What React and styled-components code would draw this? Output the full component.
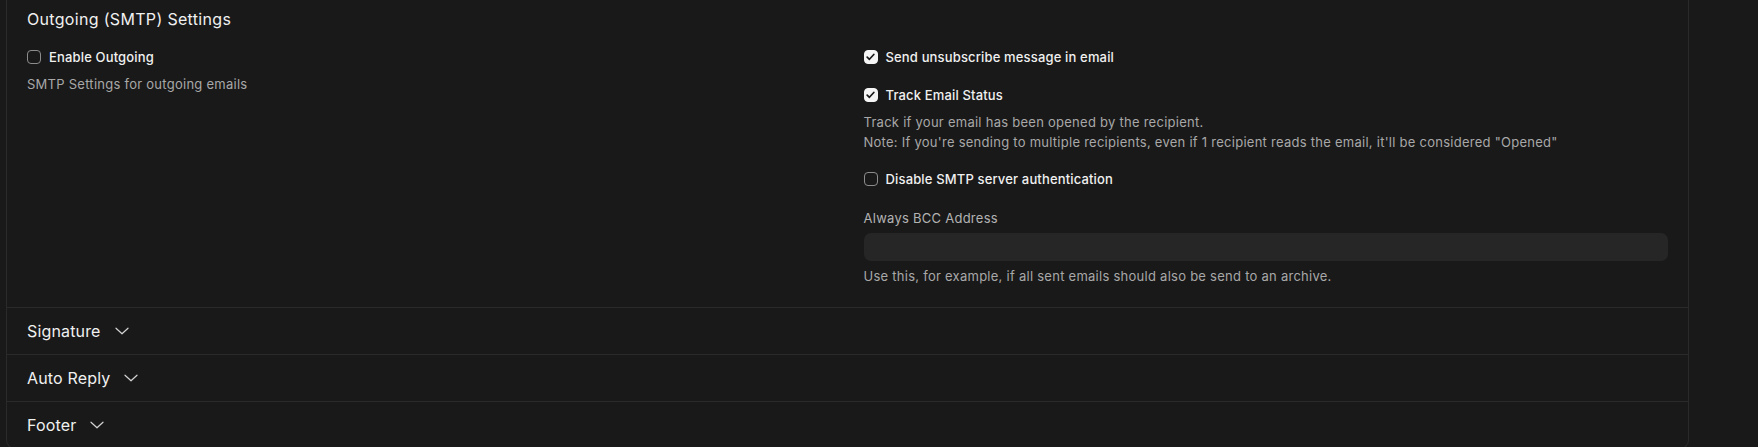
import React from 'react';
import styled, { createGlobalStyle } from 'styled-components';

const GlobalStyle = createGlobalStyle`
    html, body {
        margin: 0;
        padding: 0;
        background: #191919;
        font-family: Inter, "Noto Sans", sans-serif;
        -webkit-font-smoothing: antialiased;
    }
`;

const Page = styled.div`
    padding-left: 6px;
    height: 447px;
    overflow: hidden;
`;

const Card = styled.div`
    width: 1683px;
    box-sizing: border-box;
    border: 1px solid #2a2a2a;
    border-top: none;
    border-radius: 0 0 9px 9px;
    background: #191919;
`;

const Section = styled.div`
    padding: 7px 20px 21px;
`;

const SectionTitle = styled.h2`
    margin: 0;
    font-size: 16px;
    line-height: 24px;
    font-weight: 400;
    letter-spacing: 0.02em;
    color: #f0f0f0;
`;

const Columns = styled.div`
    display: grid;
    grid-template-columns: 1fr 1fr;
    column-gap: 32px;
    margin-top: 15px;
`;

const Column = styled.div`
    display: flex;
    flex-direction: column;
    gap: 16px;
`;

const Field = styled.div`
    display: flex;
    flex-direction: column;
    gap: ${(p) => p.gap || 6}px;
    margin-top: ${(p) => p.offset || 0}px;
`;

const CheckRow = styled.label`
    display: flex;
    align-items: center;
    gap: 8px;
    height: 22px;
    font-size: 13px;
    font-weight: 500;
    letter-spacing: 0.012em;
    color: #f0f0f0;
    cursor: pointer;
`;

const Box = styled.span`
    width: 14px;
    height: 14px;
    box-sizing: border-box;
    border-radius: 4px;
    display: inline-flex;
    align-items: center;
    justify-content: center;
    flex-shrink: 0;
    background: ${(p) => (p.checked ? '#f5f5f5' : 'transparent')};
    border: 1px solid ${(p) => (p.checked ? '#f5f5f5' : '#8c8c8c')};
`;

const Description = styled.div`
    font-size: 13px;
    line-height: 20px;
    letter-spacing: 0.02em;
    color: #a8a8a8;
`;

const FieldLabel = styled.div`
    font-size: 13px;
    line-height: 20px;
    letter-spacing: 0.02em;
    color: #b3b3b3;
`;

const Input = styled.input`
    height: 28px;
    box-sizing: border-box;
    width: 100%;
    border: none;
    outline: none;
    border-radius: 7px;
    background: #262626;
    color: #f0f0f0;
    font-family: inherit;
    font-size: 13px;
    padding: 0 10px;
`;

const Collapsible = styled.div`
    display: flex;
    align-items: center;
    gap: 14px;
    border-top: 1px solid #2a2a2a;
    padding: 13px 20px;
    font-size: 16px;
    line-height: 20px;
    font-weight: 400;
    letter-spacing: 0.01em;
    color: #f0f0f0;
    cursor: pointer;
`;

function Checkbox({ checked, label }) {
    return (
        <CheckRow>
            <Box checked={checked}>
                {checked && (
                    <svg width="9" height="8" viewBox="0 0 9 8">
                        <path
                            d="M1.2 4.2 3.4 6.3 7.8 1.5"
                            fill="none"
                            stroke="#191919"
                            strokeWidth="1.7"
                            strokeLinecap="round"
                            strokeLinejoin="round"
                        />
                    </svg>
                )}
            </Box>
            {label}
        </CheckRow>
    );
}

function Chevron() {
    return (
        <svg width="14" height="8" viewBox="0 0 14 8">
            <path
                d="M1 1.2 7 6.8 13 1.2"
                fill="none"
                stroke="#d4d4d4"
                strokeWidth="1.2"
                strokeLinecap="round"
                strokeLinejoin="round"
            />
        </svg>
    );
}

const groups = ['Signature', 'Auto Reply', 'Footer'];

function App() {
    return (
        <Page>
            <GlobalStyle />
            <Card>
                <Section>
                    <SectionTitle>Outgoing (SMTP) Settings</SectionTitle>
                    <Columns>
                        <Column>
                            <Field gap={6}>
                                <Checkbox label="Enable Outgoing" />
                                <Description>SMTP Settings for outgoing emails</Description>
                            </Field>
                        </Column>
                        <Column>
                            <Checkbox checked label="Send unsubscribe message in email" />
                            <Field gap={6}>
                                <Checkbox checked label="Track Email Status" />
                                <Description>
                                    Track if your email has been opened by the recipient.
                                    <br />
                                    Note: If you're sending to multiple recipients, even if 1
                                    recipient reads the email, it'll be considered "Opened"
                                </Description>
                            </Field>
                            <Checkbox label="Disable SMTP server authentication" />
                            <Field gap={5} offset={2}>
                                <FieldLabel>Always BCC Address</FieldLabel>
                                <Input type="text" />
                                <Description>
                                    Use this, for example, if all sent emails should also be send
                                    to an archive.
                                </Description>
                            </Field>
                        </Column>
                    </Columns>
                </Section>
                {groups.map((g) => (
                    <Collapsible key={g}>
                        {g}
                        <Chevron />
                    </Collapsible>
                ))}
            </Card>
        </Page>
    );
}

export default App;
